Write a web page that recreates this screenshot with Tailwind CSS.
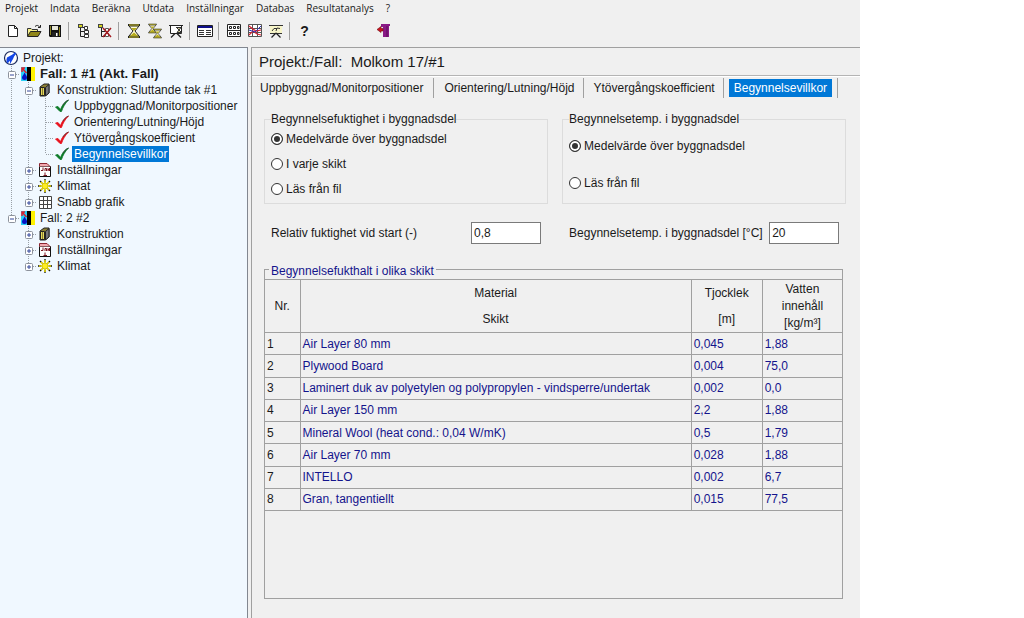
<!DOCTYPE html>
<html lang="sv">

<head>
    <meta charset="UTF-8" />
    <meta name="viewport" content="width=device-width, initial-scale=1.0" />
    <title>Projekt:/Fall: Molkom 17/#1</title>
    <script src="https://cdn.jsdelivr.net/npm/@tailwindcss/browser@4"></script>
</head>
<body class="bg-white font-['Liberation_Sans',Arial,sans-serif] text-[12px] leading-4 text-[#1a1a1a]">

    <!-- Tree symbols -->
    <svg class="hidden">
        <symbol id="line-v" viewBox="0 0 17 16"><path d="M8.5 0V16" stroke="#9aa0a6" stroke-dasharray="1 1" /></symbol>
        <symbol id="line-branch" viewBox="0 0 17 16"><path d="M8.5 0V16M9 8.5H17" fill="none" stroke="#9aa0a6" stroke-dasharray="1 1" /></symbol>
        <symbol id="line-end" viewBox="0 0 17 16"><path d="M8.5 0V8M9 8.5H17" fill="none" stroke="#9aa0a6" stroke-dasharray="1 1" /></symbol>
        <symbol id="box-minus" viewBox="0 0 17 16">
            <path d="M8.5 0V16M13 8.5H17" fill="none" stroke="#9aa0a6" stroke-dasharray="1 1" />
            <rect x="5.5" y="5.5" width="7" height="7" rx="1" fill="#fff" stroke="#8c929c" />
            <path d="M7 9H11" stroke="#33479a" />
        </symbol>
        <symbol id="box-minus-end" viewBox="0 0 17 16">
            <path d="M8.5 0V5M13 8.5H17" fill="none" stroke="#9aa0a6" stroke-dasharray="1 1" />
            <rect x="5.5" y="5.5" width="7" height="7" rx="1" fill="#fff" stroke="#8c929c" />
            <path d="M7 9H11" stroke="#33479a" />
        </symbol>
        <symbol id="box-plus" viewBox="0 0 17 16">
            <path d="M8.5 0V16M13 8.5H17" fill="none" stroke="#9aa0a6" stroke-dasharray="1 1" />
            <rect x="5.5" y="5.5" width="7" height="7" rx="1" fill="#fff" stroke="#8c929c" />
            <path d="M7 9H11M9 7V11" stroke="#33479a" />
        </symbol>
        <symbol id="box-plus-end" viewBox="0 0 17 16">
            <path d="M8.5 0V5M13 8.5H17" fill="none" stroke="#9aa0a6" stroke-dasharray="1 1" />
            <rect x="5.5" y="5.5" width="7" height="7" rx="1" fill="#fff" stroke="#8c929c" />
            <path d="M7 9H11M9 7V11" stroke="#33479a" />
        </symbol>
        <symbol id="case" viewBox="0 0 17 16">
            <path d="M1 1H8V15H1z" fill="#2bd0f5" />
            <path d="M7 1H11V15H7z" fill="#000" />
            <path d="M11 1H15V15H11z" fill="#fff200" />
            <path d="M2 2L6.500 7M2 6V2H5" fill="none" stroke="#e0202c" stroke-width="1.5" />
            <path d="M4.500 6.500C6 9 7 10 7 11.500A2.500 2.500 0 0 1 2 11.500C2 10 3.500 9 4.500 6.500z" fill="#0713c4" />
        </symbol>
        <symbol id="wall" viewBox="0 0 17 16">
            <path d="M3 5L7 2H12V11L8 14H3z" fill="#8a7f35" stroke="#222" />
            <path d="M3.500 5.500H7.500V13.500H3.500z" fill="#e6da5c" stroke="#222" />
            <path d="M5.500 6V13" stroke="#8a7f35" />
            <path d="M8.500 5.500L12 2.500V11L8.500 14z" fill="#77777a" stroke="#222" />
        </symbol>
        <symbol id="calendar" viewBox="0 0 17 16">
            <path d="M2.500 4.500H13.500V14.500H2.500z" fill="#fff" stroke="#111" />
            <path d="M2.500 4.500V1.500H10L13 4.500" fill="#f3a7ae" stroke="#8d2530" />
            <path d="M6 5.500V8.500H4M8 9V6.500H9.500V9M11 9V6.500L12.500 9V6M8 10.500V13M6.500 13.500H10" fill="none" stroke="#7c1722" />
        </symbol>
        <symbol id="sun" viewBox="0 0 17 16">
            <path d="M8 1V4M8 12V15M1 8H4M12 8H15M3 3L5 5M11 11L13 13M13 3L11 5M3 13L5 11" stroke="#111" stroke-width="1.300" />
            <path d="M8 2V14M2 8H14M4 4L12 12M12 4L4 12" stroke="#e8d800" stroke-width="1.600" />
            <circle cx="8" cy="8" r="3" fill="#ffee1f" stroke="#b5a80a" stroke-width=".6" />
        </symbol>
        <symbol id="grid" viewBox="0 0 17 16">
            <path d="M2.500 2.500H14.500V14.500H2.500zM6.500 2.500V14.500M10.500 2.500V14.500M2.500 6.500H14.500M2.500 10.500H14.500" fill="#fff" stroke="#444" />
        </symbol>
        <symbol id="check" viewBox="0 0 17 16">
            <path d="M1.500 9L4 8.500L6.500 11.500C8 7 11 3.500 14.500 2C11 5.500 9 9 7.500 13.500H6z" fill="currentColor" stroke="currentColor" stroke-width=".8" />
            <path d="M9 7C10 5 12 3 14.500 2" fill="none" stroke="#333" stroke-width=".7" />
        </symbol>
        <symbol id="hourglass" viewBox="0 0 16 16">
            <path d="M3 3H13L9 8L13 13H3L7 8z" fill="#fffbd0" stroke="#222" />
            <path d="M5 5H11L8 8zM4 13L8 9.500L12 13z" fill="#b5ab1c" />
            <path d="M2 2H14M2 14H14" stroke="#222" stroke-width="2" />
            <path d="M3 2H13M3 14H13" stroke="#d8cc30" />
        </symbol>
    </svg>

    <div class="flex h-screen w-[84%] flex-col bg-[#f0f0f0]">

        <!-- Menu -->
        <nav class="flex h-[15px] shrink-0 gap-3 pl-[5px] font-['Open_Sans','Noto_Sans',sans-serif] text-[10px] leading-[14px]">
            <button>Projekt</button>
            <button>Indata</button>
            <button>Beräkna</button>
            <button>Utdata</button>
            <button>Inställningar</button>
            <button>Databas</button>
            <button>Resultatanalys</button>
            <button>?</button>
        </nav>

        <!-- Toolbar -->
        <div class="flex h-8 shrink-0 items-center pl-0.5">
            <button aria-label="Ny" class="flex w-[21px] justify-center">
                <svg class="size-4" viewBox="0 0 16 16"><path d="M3.500 2.500H9.500L12.500 5.500V13.500H3.500z" fill="#fff" stroke="#222" /><path d="M9.500 2.500V5.500H12.500" fill="none" stroke="#222" /></svg>
            </button>
            <button aria-label="Öppna" class="flex w-[21px] justify-center">
                <svg class="size-4" viewBox="0 0 16 16"><path d="M1.500 13V5.500H5L6 6.500H11.500V9" fill="#f5ef8a" stroke="#333" /><path d="M1.500 13.500L4.500 8.500H15L12 13.500z" fill="#908618" stroke="#222" /><path d="M9 3.500C10.500 2 12.500 2 13.500 4M14.500 2V4.500H12" fill="none" stroke="#222" /></svg>
            </button>
            <button aria-label="Spara" class="flex w-[21px] justify-center">
                <svg class="size-4" viewBox="0 0 16 16"><path d="M2 2H14V14H3L2 13z" fill="#111" /><path d="M3 3H4V12H3zM12 4H13V13H12z" fill="#8c8420" /><path d="M5 3H11V7H5z" fill="#e6e6d8" /><path d="M5 9H11V14H5z" fill="#222" /><path d="M9 10H10.500V13H9z" fill="#fff" /></svg>
            </button>
            <span class="flex h-[18px] w-2 pl-[3px]"><i class="w-px bg-[#a0a0a0]"></i></span>
            <button aria-label="Visa träd" class="flex w-[21px] justify-center">
                <svg class="size-4" viewBox="0 0 16 16"><path d="M4.500 5V13.500H8M4.500 8.500H8M5 4.500H8" fill="none" stroke="#222" /><rect x="2.500" y="1.500" width="4" height="3" fill="#d5d51f" stroke="#444" /><path d="M8.500 3.500H11.500V6.500H8.500zM8.500 7.500H12.500V10.500H8.500zM8.500 11.500H12.500V14.500H8.500z" fill="#fff" stroke="#333" /></svg>
            </button>
            <button aria-label="Dölj träd" class="flex w-[21px] justify-center">
                <svg class="size-4" viewBox="0 0 16 16"><path d="M4.500 5V13.500H8M4.500 8.500H8" fill="none" stroke="#222" /><path d="M8.500 5.500H11.500V8.500H8.500zM8.500 10.500H11.500V13.500H8.500z" fill="#fff" stroke="#555" /><rect x="1.500" y="1.500" width="4" height="3" fill="#d5d51f" stroke="#444" /><path d="M6 5L14 14M14 5L6 14" stroke="#a51a20" stroke-width="1.500" /></svg>
            </button>
            <span class="flex h-[18px] w-2 pl-[3px]"><i class="w-px bg-[#a0a0a0]"></i></span>
            <button aria-label="Beräkna" class="flex w-[21px] justify-center">
                <svg class="size-4"><use href="#hourglass" /></svg>
            </button>
            <button aria-label="Beräkna alla" class="flex w-[21px] justify-center">
                <svg class="size-4" viewBox="0 0 16 16"><use href="#hourglass" x="0" y="0" width="11" height="11" /><use href="#hourglass" x="5" y="5" width="11" height="11" /></svg>
            </button>
            <button aria-label="Beräkna med film" class="flex w-[21px] justify-center">
                <svg class="size-4" viewBox="0 0 16 16"><path d="M1 2.500H15M2.500 3V10.500H13.500V3" fill="#fff" stroke="#222" /><path d="M7 10.500L3 14.500M9 10.500L13 14.500" stroke="#222" stroke-width="1.300" /><path d="M8 4.500H13L9 9.500H13.500L8.500 4.500" fill="#d8d49a" stroke="#333" /></svg>
            </button>
            <span class="flex h-[18px] w-2 pl-[3px]"><i class="w-px bg-[#a0a0a0]"></i></span>
            <button aria-label="Lista" class="flex w-[21px] justify-center">
                <svg class="size-4" viewBox="0 0 16 16"><path d="M.5 2.500H15.500V13.500H.5z" fill="#fff" stroke="#222" /><path d="M1 3H15V5H1z" fill="#10108a" /><path d="M2 7.500H7M9 7.500H14M2 9.500H7M9 9.500H14M2 11.500H7M9 11.500H14" stroke="#333" /></svg>
            </button>
            <span class="flex h-[18px] w-2 pl-[3px]"><i class="w-px bg-[#a0a0a0]"></i></span>
            <button aria-label="Snabb grafik" class="flex w-[21px] justify-center">
                <svg class="size-4" viewBox="0 0 16 16"><path d="M1.500 1.500H14.500V13.500H1.500z" fill="#fff" stroke="#222" /><path d="M3.500 3.500H5.500V5.500H3.500zM7.500 3.500H9.500V5.500H7.500zM11.500 3.500H13V5.500H11.500zM3.500 9.500H5.500V11.500H3.500zM7.500 9.500H9.500V11.500H7.500zM11.500 9.500H13V11.500H11.500zM2 7.500H14" fill="none" stroke="#222" /></svg>
            </button>
            <button aria-label="Resultatgrafik" class="flex w-[21px] justify-center">
                <svg class="size-4" viewBox="0 0 16 16"><path d="M1.500 1.500H14.500V13.500H1.500zM5.500 2V13M10.500 2V13M2 5.500H14M2 9.500H14" fill="#fff" stroke="#555" /><path d="M2 3L6 6L9 8L14 7M2 12L6 8L10 11L14 12" fill="none" stroke="#d82030" stroke-width="1.200" /><path d="M2 7L8 9L14 3" fill="none" stroke="#3030b8" /></svg>
            </button>
            <button aria-label="Film" class="flex w-[21px] justify-center">
                <svg class="size-4" viewBox="0 0 16 16"><path d="M2 3H14V10H2z" fill="#f7f5c9" /><path d="M1 2.500H15M2 10.500H14" stroke="#333" /><path d="M4 8L6 5.500H9M8 8L9 5L12 5.500" fill="none" stroke="#333" /><path d="M8 10L3.500 14.500M8 10L12.500 14.500" stroke="#222" stroke-width="1.300" /></svg>
            </button>
            <span class="flex h-[18px] w-2 pl-[3px]"><i class="w-px bg-[#a0a0a0]"></i></span>
            <button aria-label="Hjälp" class="w-[21px] text-center text-[14px] font-bold">?</button>
            <button aria-label="Avsluta" class="ml-[58px] flex w-[21px] justify-center">
                <svg class="size-4" viewBox="0 0 16 16"><path d="M5 1H14V3H13V14H7V4H5z" fill="#8a1a86" /><path d="M11 3V14" stroke="#5a0f5a" /><path d="M1 6.500L5 3.500V5.500H7V8H5V9.500z" fill="#c8141e" stroke="#701018" stroke-width=".6" /></svg>
            </button>
        </div>

        <div class="flex min-h-0 flex-1 gap-[3px]">

            <!-- Project tree -->
            <aside class="w-[248px] shrink-0 border-t border-r border-[#828790] bg-[#f0f8ff] pt-0.5 pl-[3px]">
                <ul class="whitespace-nowrap">
                    <li>
                        <a href="#" class="flex h-4 items-center">
                            <svg class="h-4 w-[17px]" viewBox="0 0 17 16"><circle cx="8" cy="8" r="6.500" fill="#fff" stroke="#1a2a5c" stroke-width="1.200" /><path d="M12.500 3L4 7.500A5 5 0 0 0 4 12L7 9V14L10 9z" fill="#1448e8" /><path d="M12.500 3L4 12.500" stroke="#1448e8" stroke-width="2" /></svg>
                            <span class="pl-[3px]">Projekt:</span>
                        </a>
                    </li>
                    <li>
                        <a href="#" class="flex h-4 items-center text-[13px] font-bold">
                            <svg class="h-4 w-[17px]"><use href="#box-minus" /></svg>
                            <svg class="h-4 w-[17px]"><use href="#case" /></svg>
                            <span class="pl-[3px]">Fall: 1 #1 (Akt. Fall)</span>
                        </a>
                        <ul>
                            <li>
                                <a href="#" class="flex h-4 items-center">
                                    <svg class="h-4 w-[17px]"><use href="#line-v" /></svg>
                                    <svg class="h-4 w-[17px]"><use href="#box-minus" /></svg>
                                    <svg class="h-4 w-[17px]"><use href="#wall" /></svg>
                                    <span class="pl-[3px]">Konstruktion: Sluttande tak #1</span>
                                </a>
                                <ul>
                                    <li>
                                        <a href="#" class="flex h-4 items-center">
                                            <svg class="h-4 w-[17px]"><use href="#line-v" /></svg>
                                            <svg class="h-4 w-[17px]"><use href="#line-v" /></svg>
                                            <svg class="h-4 w-[17px]"><use href="#line-branch" /></svg>
                                            <svg class="h-4 w-[17px] text-[#0c7a28]"><use href="#check" /></svg>
                                            <span class="pl-[3px]">Uppbyggnad/Monitorpositioner</span>
                                        </a>
                                    </li>
                                    <li>
                                        <a href="#" class="flex h-4 items-center">
                                            <svg class="h-4 w-[17px]"><use href="#line-v" /></svg>
                                            <svg class="h-4 w-[17px]"><use href="#line-v" /></svg>
                                            <svg class="h-4 w-[17px]"><use href="#line-branch" /></svg>
                                            <svg class="h-4 w-[17px] text-[#e8101c]"><use href="#check" /></svg>
                                            <span class="pl-[3px]">Orientering/Lutning/Höjd</span>
                                        </a>
                                    </li>
                                    <li>
                                        <a href="#" class="flex h-4 items-center">
                                            <svg class="h-4 w-[17px]"><use href="#line-v" /></svg>
                                            <svg class="h-4 w-[17px]"><use href="#line-v" /></svg>
                                            <svg class="h-4 w-[17px]"><use href="#line-branch" /></svg>
                                            <svg class="h-4 w-[17px] text-[#e8101c]"><use href="#check" /></svg>
                                            <span class="pl-[3px]">Ytövergångskoefficient</span>
                                        </a>
                                    </li>
                                    <li>
                                        <a href="#" class="flex h-4 items-center">
                                            <svg class="h-4 w-[17px]"><use href="#line-v" /></svg>
                                            <svg class="h-4 w-[17px]"><use href="#line-v" /></svg>
                                            <svg class="h-4 w-[17px]"><use href="#line-end" /></svg>
                                            <svg class="h-4 w-[17px] text-[#0c7a28]"><use href="#check" /></svg>
                                            <span class="ml-px bg-[#0078d7] px-0.5 text-white">Begynnelsevillkor</span>
                                        </a>
                                    </li>
                                </ul>
                            </li>
                            <li>
                                <a href="#" class="flex h-4 items-center">
                                    <svg class="h-4 w-[17px]"><use href="#line-v" /></svg>
                                    <svg class="h-4 w-[17px]"><use href="#box-plus" /></svg>
                                    <svg class="h-4 w-[17px]"><use href="#calendar" /></svg>
                                    <span class="pl-[3px]">Inställningar</span>
                                </a>
                            </li>
                            <li>
                                <a href="#" class="flex h-4 items-center">
                                    <svg class="h-4 w-[17px]"><use href="#line-v" /></svg>
                                    <svg class="h-4 w-[17px]"><use href="#box-plus" /></svg>
                                    <svg class="h-4 w-[17px]"><use href="#sun" /></svg>
                                    <span class="pl-[3px]">Klimat</span>
                                </a>
                            </li>
                            <li>
                                <a href="#" class="flex h-4 items-center">
                                    <svg class="h-4 w-[17px]"><use href="#line-v" /></svg>
                                    <svg class="h-4 w-[17px]"><use href="#box-plus-end" /></svg>
                                    <svg class="h-4 w-[17px]"><use href="#grid" /></svg>
                                    <span class="pl-[3px]">Snabb grafik</span>
                                </a>
                            </li>
                        </ul>
                    </li>
                    <li>
                        <a href="#" class="flex h-4 items-center">
                            <svg class="h-4 w-[17px]"><use href="#box-minus-end" /></svg>
                            <svg class="h-4 w-[17px]"><use href="#case" /></svg>
                            <span class="pl-[3px]">Fall: 2 #2</span>
                        </a>
                        <ul class="pl-[17px]">
                            <li>
                                <a href="#" class="flex h-4 items-center">
                                    <svg class="h-4 w-[17px]"><use href="#box-plus" /></svg>
                                    <svg class="h-4 w-[17px]"><use href="#wall" /></svg>
                                    <span class="pl-[3px]">Konstruktion</span>
                                </a>
                            </li>
                            <li>
                                <a href="#" class="flex h-4 items-center">
                                    <svg class="h-4 w-[17px]"><use href="#box-plus" /></svg>
                                    <svg class="h-4 w-[17px]"><use href="#calendar" /></svg>
                                    <span class="pl-[3px]">Inställningar</span>
                                </a>
                            </li>
                            <li>
                                <a href="#" class="flex h-4 items-center">
                                    <svg class="h-4 w-[17px]"><use href="#box-plus-end" /></svg>
                                    <svg class="h-4 w-[17px]"><use href="#sun" /></svg>
                                    <span class="pl-[3px]">Klimat</span>
                                </a>
                            </li>
                        </ul>
                    </li>
                </ul>
            </aside>

            <!-- Case panel -->
            <main class="flex min-w-0 flex-1 flex-col border-t border-l border-[#a0a0a0]">
                <h1 class="h-[28px] shrink-0 border-b border-[#b4b4b4] pl-[7px] text-[15px] leading-[28px] whitespace-pre">Projekt:/Fall:  Molkom 17/#1</h1>

                <!-- Tabs -->
                <div class="flex h-[22px] shrink-0 items-end border-t border-white whitespace-nowrap">
                    <button class="h-5 border-r border-[#a0a0a0] pr-[10px] pl-2">Uppbyggnad/Monitorpositioner</button>
                    <button class="h-5 border-r border-[#a0a0a0] pr-2 pl-[10px]">Orientering/Lutning/Höjd</button>
                    <button class="h-5 border-r border-[#a0a0a0] pr-2 pl-[10px]">Ytövergångskoefficient</button>
                    <button class="flex h-5 items-center border-r border-[#a0a0a0] px-[5px]"><span class="bg-[#0078d7] px-[5px] leading-[18px] text-white">Begynnelsevillkor</span></button>
                </div>

                <div class="grid grid-cols-2 gap-x-[14px] gap-y-[18px] pt-[13px] pr-[14px] pl-3">
                    <fieldset class="border border-[#dcdcdc] px-1.5 pb-1.5">
                        <legend>Begynnelsefuktighet i byggnadsdel</legend>
                        <div class="flex flex-col gap-[9px] pt-1">
                            <label class="flex h-4 items-center gap-[3px]"><input type="radio" name="fukt" checked class="size-3 appearance-none rounded-full border border-[#333] bg-white checked:border-[#333] checked:bg-[#333] checked:shadow-[inset_0_0_0_2px_#fff]" />Medelvärde över byggnadsdel</label>
                            <label class="flex h-4 items-center gap-[3px]"><input type="radio" name="fukt" class="size-3 appearance-none rounded-full border border-[#333] bg-white checked:border-[#333] checked:bg-[#333] checked:shadow-[inset_0_0_0_2px_#fff]" />I varje skikt</label>
                            <label class="flex h-4 items-center gap-[3px]"><input type="radio" name="fukt" class="size-3 appearance-none rounded-full border border-[#333] bg-white checked:border-[#333] checked:bg-[#333] checked:shadow-[inset_0_0_0_2px_#fff]" />Läs från fil</label>
                        </div>
                    </fieldset>
                    <fieldset class="border border-[#dcdcdc] px-1.5">
                        <legend>Begynnelsetemp. i byggnadsdel</legend>
                        <div class="flex flex-col gap-[21px] pt-[11px]">
                            <label class="flex h-4 items-center gap-[3px]"><input type="radio" name="temp" checked class="size-3 appearance-none rounded-full border border-[#333] bg-white checked:border-[#333] checked:bg-[#333] checked:shadow-[inset_0_0_0_2px_#fff]" />Medelvärde över byggnadsdel</label>
                            <label class="flex h-4 items-center gap-[3px]"><input type="radio" name="temp" class="size-3 appearance-none rounded-full border border-[#333] bg-white checked:border-[#333] checked:bg-[#333] checked:shadow-[inset_0_0_0_2px_#fff]" />Läs från fil</label>
                        </div>
                    </fieldset>
                    <div class="flex items-center justify-between px-[7px]">
                        <label for="rf-start">Relativ fuktighet vid start (-)</label>
                        <input id="rf-start" type="text" value="0,8" class="h-[22px] w-[70px] border border-[#7a7a7a] bg-white px-0.5" />
                    </div>
                    <div class="flex items-center justify-between px-[7px] whitespace-nowrap">
                        <label for="temp-start">Begynnelsetemp. i byggnadsdel [°C]</label>
                        <input id="temp-start" type="text" value="20" class="h-[22px] w-[70px] border border-[#7a7a7a] bg-white px-0.5" />
                    </div>
                </div>

                <!-- Layer table -->
                <fieldset class="mt-[15px] mr-[17px] mb-[19px] ml-3 min-w-0 flex-1 border border-[#a0a0a0]">
                    <legend class="ml-1 px-0.5 pt-1 text-[#14148c]">Begynnelsefukthalt i olika skikt</legend>
                    <table class="h-[232px] w-full table-fixed border-collapse border-y border-[#a0a0a0]">
                        <colgroup>
                            <col class="w-[35px]" />
                            <col />
                            <col class="w-[71px]" />
                            <col class="w-[80px]" />
                        </colgroup>
                        <thead>
                            <tr class="h-[52px] border-b border-[#a0a0a0]">
                                <th class="border-r border-[#a0a0a0] font-normal">Nr.</th>
                                <th class="border-r border-[#a0a0a0] leading-[26px] font-normal">Material<br />Skikt</th>
                                <th class="border-r border-[#a0a0a0] leading-[26px] font-normal">Tjocklek<br />[m]</th>
                                <th class="leading-[17px] font-normal">Vatten<br />innehåll<br />[kg/m³]</th>
                            </tr>
                        </thead>
                        <tbody class="text-[#14148c]">
                            <tr class="border-b border-[#a0a0a0]">
                                <td class="border-r border-[#a0a0a0] pl-0.5 text-[#1a1a1a]">1</td>
                                <td class="border-r border-[#a0a0a0] pl-0.5">Air Layer 80 mm</td>
                                <td class="border-r border-[#a0a0a0] pl-0.5">0,045</td>
                                <td class="pl-0.5">1,88</td>
                            </tr>
                            <tr class="border-b border-[#a0a0a0]">
                                <td class="border-r border-[#a0a0a0] pl-0.5 text-[#1a1a1a]">2</td>
                                <td class="border-r border-[#a0a0a0] pl-0.5">Plywood Board</td>
                                <td class="border-r border-[#a0a0a0] pl-0.5">0,004</td>
                                <td class="pl-0.5">75,0</td>
                            </tr>
                            <tr class="border-b border-[#a0a0a0]">
                                <td class="border-r border-[#a0a0a0] pl-0.5 text-[#1a1a1a]">3</td>
                                <td class="border-r border-[#a0a0a0] pl-0.5">Laminert duk av polyetylen og polypropylen - vindsperre/undertak</td>
                                <td class="border-r border-[#a0a0a0] pl-0.5">0,002</td>
                                <td class="pl-0.5">0,0</td>
                            </tr>
                            <tr class="border-b border-[#a0a0a0]">
                                <td class="border-r border-[#a0a0a0] pl-0.5 text-[#1a1a1a]">4</td>
                                <td class="border-r border-[#a0a0a0] pl-0.5">Air Layer 150 mm</td>
                                <td class="border-r border-[#a0a0a0] pl-0.5">2,2</td>
                                <td class="pl-0.5">1,88</td>
                            </tr>
                            <tr class="border-b border-[#a0a0a0]">
                                <td class="border-r border-[#a0a0a0] pl-0.5 text-[#1a1a1a]">5</td>
                                <td class="border-r border-[#a0a0a0] pl-0.5">Mineral Wool (heat cond.: 0,04 W/mK)</td>
                                <td class="border-r border-[#a0a0a0] pl-0.5">0,5</td>
                                <td class="pl-0.5">1,79</td>
                            </tr>
                            <tr class="border-b border-[#a0a0a0]">
                                <td class="border-r border-[#a0a0a0] pl-0.5 text-[#1a1a1a]">6</td>
                                <td class="border-r border-[#a0a0a0] pl-0.5">Air Layer 70 mm</td>
                                <td class="border-r border-[#a0a0a0] pl-0.5">0,028</td>
                                <td class="pl-0.5">1,88</td>
                            </tr>
                            <tr class="border-b border-[#a0a0a0]">
                                <td class="border-r border-[#a0a0a0] pl-0.5 text-[#1a1a1a]">7</td>
                                <td class="border-r border-[#a0a0a0] pl-0.5">INTELLO</td>
                                <td class="border-r border-[#a0a0a0] pl-0.5">0,002</td>
                                <td class="pl-0.5">6,7</td>
                            </tr>
                            <tr class="border-b border-[#a0a0a0]">
                                <td class="border-r border-[#a0a0a0] pl-0.5 text-[#1a1a1a]">8</td>
                                <td class="border-r border-[#a0a0a0] pl-0.5">Gran, tangentiellt</td>
                                <td class="border-r border-[#a0a0a0] pl-0.5">0,015</td>
                                <td class="pl-0.5">77,5</td>
                            </tr>
                        </tbody>
                    </table>
                </fieldset>
            </main>
        </div>
    </div>
</body>

</html>
